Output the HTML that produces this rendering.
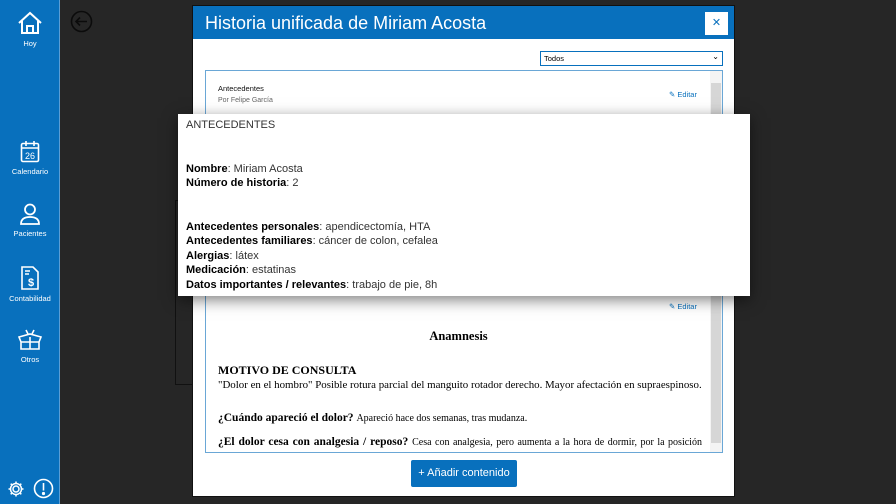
<!DOCTYPE html>
<html><head><meta charset="utf-8"><style>
*{margin:0;padding:0;box-sizing:border-box}
body{width:896px;height:504px;background:#262626;position:relative;overflow:hidden;font-family:"Liberation Sans",sans-serif}
.side{position:absolute;left:0;top:0;width:60px;height:504px;background:#0870bd;border-right:1px solid #5a9ed6}
.nav{position:absolute;left:0;width:60px;text-align:center;color:#fff;font-size:7.5px}
.nav svg{display:block;margin:0 auto 3px}
.modal{position:absolute;left:192px;top:5px;width:543px;height:492px;background:#fff;border:1px solid #111}
.hdr{height:33px;background:#0870bd;color:#fff;font-size:18px;padding:7px 0 0 12px}
.close{position:absolute;left:512px;top:6px;width:23px;height:23px;background:#fff;color:#0870bd;text-align:center;font-size:11px;line-height:22px}
.sel{position:absolute;left:347px;top:45px;width:183px;height:15px;border:1px solid #0870bd;font-size:7.5px;padding:2px 3px;color:#000}
.box{position:absolute;left:12px;top:64px;width:518px;height:383px;border:1px solid #6aa7d6;overflow:hidden}
.sb{position:absolute;right:0;top:0;width:12px;height:100%;background:#f4f4f4;z-index:2}
.popup{position:absolute;z-index:10;left:178px;top:114px;width:572px;height:182px;background:#fff;box-shadow:0 4px 14px rgba(0,0,0,.5);font-size:11px;color:#333;padding:4px 8px;line-height:14.5px}
.popup b{color:#000}
.ser{font-family:"Liberation Serif",serif;color:#000;position:absolute;white-space:nowrap}
.btn{position:absolute;left:218px;top:454px;width:106px;height:27px;background:#0870bd;color:#fff;font-size:11px;text-align:center;line-height:27px;border-radius:2px}
.edit{position:absolute;color:#0870bd;font-size:7.5px}
</style></head><body>
<div class="side">
 <div class="nav" style="top:10px"><svg width="26" height="26" viewBox="0 0 26 26" fill="none" stroke="#fff" stroke-width="2"><path d="M2 13 L13 3 L24 13 M5 11 V23 H21 V11 M10 23 V16 H16 V23"/></svg>Hoy</div>
 <div class="nav" style="top:140px"><svg width="20" height="24" viewBox="0 0 20 24" fill="none" stroke="#fff" stroke-width="1.6"><rect x="1.5" y="3.5" width="17" height="18" rx="1.5"/><path d="M1.5 8H18.5M6 1v5M14 1v5"/><text x="10" y="19" font-size="9" fill="#fff" stroke="none" text-anchor="middle" font-family="Liberation Sans">26</text></svg>Calendario</div>
 <div class="nav" style="top:203px"><svg width="22" height="23" viewBox="0 0 22 23" fill="none" stroke="#fff" stroke-width="1.8"><circle cx="11" cy="6.5" r="5"/><path d="M2 21 Q2 14 11 14 Q20 14 20 21Z"/></svg>Pacientes</div>
 <div class="nav" style="top:265px"><svg width="20" height="26" viewBox="0 0 20 26" fill="none" stroke="#fff" stroke-width="1.6"><path d="M2 2H13L18 7V24H2Z"/><path d="M5 6H10M5 9H9"/><text x="11" y="21" font-size="11" fill="#fff" stroke="none" text-anchor="middle" font-weight="bold" font-family="Liberation Sans">$</text></svg>Contabilidad</div>
 <div class="nav" style="top:328px"><svg width="26" height="24" viewBox="0 0 26 24" fill="none" stroke="#fff" stroke-width="1.6"><path d="M2 9L13 6L24 9L22 14H4Z M4 14V21H22V14 M13 9V21 M9 2L11 6M17 2L15 6"/></svg>Otros</div>
 <svg style="position:absolute;left:7px;top:480px" width="18" height="18" viewBox="0 0 18 18" fill="none" stroke="#fff" stroke-width="1.5"><circle cx="9" cy="9" r="3"/><path d="M9 1.5V4M9 14V16.5M1.5 9H4M14 9H16.5M3.7 3.7L5.5 5.5M12.5 12.5L14.3 14.3M3.7 14.3L5.5 12.5M12.5 5.5L14.3 3.7"/><circle cx="9" cy="9" r="5.5"/></svg>
 <svg style="position:absolute;left:33px;top:478px" width="21" height="21" viewBox="0 0 21 21" fill="none" stroke="#fff" stroke-width="1.6"><circle cx="10.5" cy="10.5" r="9"/><path d="M10.5 5V12.5"/><circle cx="10.5" cy="15.5" r=".8" fill="#fff"/></svg>
</div>
<svg style="position:absolute;left:70px;top:10px" width="23" height="23" viewBox="0 0 23 23" fill="none" stroke="#0b0b0b" stroke-width="1.6"><circle cx="11.5" cy="11.5" r="10"/><path d="M17 11.5H6M10 7.5L6 11.5L10 15.5"/></svg>
<div style="position:absolute;left:175px;top:200px;width:20px;height:185px;border:1px solid #111"></div>
<div class="modal">
 <div class="hdr">Historia unificada de Miriam Acosta</div>
 <div class="close">✕</div>
 <div class="sel">Todos<span style="position:absolute;right:3px;top:0px;font-size:8px">⌄</span></div>
 <div class="box">
  <div class="sb"><div style="position:absolute;top:12px;left:1px;width:10px;height:360px;background:#d6d6d6"></div></div>
  <div style="position:absolute;left:12px;top:13px;font-size:7.5px;color:#111">Antecedentes</div>
  <div style="position:absolute;left:12px;top:26px;font-size:7px;color:#666">Por Felipe García</div>
  <div class="edit" style="left:463px;top:19px">✎ Editar</div>
  <div class="edit" style="left:463px;top:231px">✎ Editar</div>
  <div class="ser" style="left:0;width:505px;text-align:center;top:258px;font-size:12.5px;font-weight:bold">Anamnesis</div>
  <div class="ser" style="left:12px;top:292px;font-size:12px;font-weight:bold">MOTIVO DE CONSULTA</div>
  <div class="ser" style="left:12px;top:308px;font-size:10.9px">"Dolor en el hombro" Posible rotura parcial del manguito rotador derecho. Mayor afectación en supraespinoso.</div>
  <div class="ser" style="left:12px;top:341px;font-size:11.5px"><b>¿Cuándo apareció el dolor?</b> <span style="font-size:10px">Apareció hace dos semanas, tras mudanza.</span></div>
  <div class="ser" style="left:12px;top:365px;font-size:11.5px;word-spacing:1px"><b>¿El dolor cesa con analgesia / reposo?</b> <span style="font-size:10px">Cesa con analgesia, pero aumenta a la hora de dormir, por la posición</span></div>
 </div>
 <div class="btn">+ Añadir contenido</div>
</div>
<div class="popup">ANTECEDENTES<br><br><br><b>Nombre</b>: Miriam Acosta<br><b>Número de historia</b>: 2<br><br><br><b>Antecedentes personales</b>: apendicectomía, HTA<br><b>Antecedentes familiares</b>: cáncer de colon, cefalea<br><b>Alergias</b>: látex<br><b>Medicación</b>: estatinas<br><b>Datos importantes / relevantes</b>: trabajo de pie, 8h</div>
</body></html>
